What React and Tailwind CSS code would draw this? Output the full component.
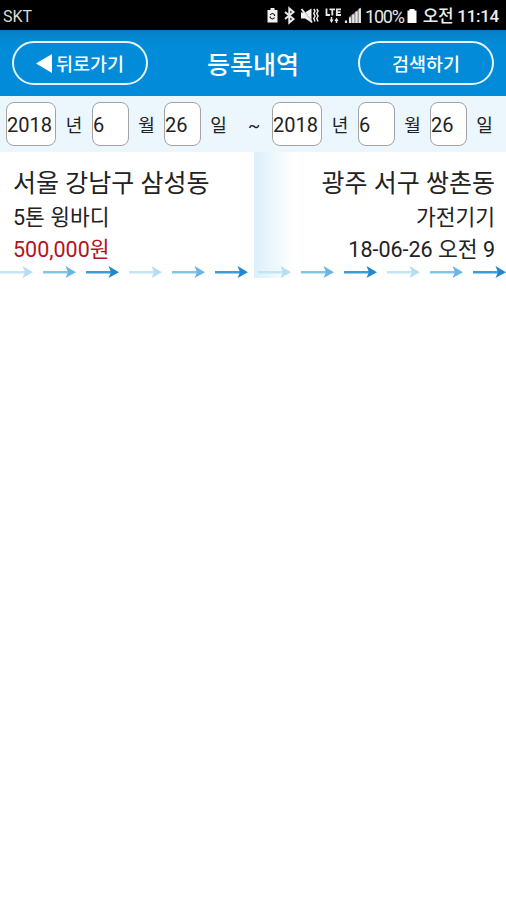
import React from 'react';

const arrowColors = [
  { shaft: '#c3e5f7', head: '#b5def3' },
  { shaft: '#84c4ea', head: '#6ab5e3' },
  { shaft: '#3f9cd9', head: '#2187cf' },
];

const order = {
  from: '서울 강남구 삼성동',
  truck: '5톤 윙바디',
  price: '500,000원',
  to: '광주 서구 쌍촌동',
  cargo: '가전기기',
  date: '18-06-26 오전 9',
};

function StatusIcons() {
  return (
    <svg className="block h-[30px] w-[98px]" viewBox="266 0 98 30" fill="none" stroke="#e8e8e8">
      {/* battery saver */}
      <path d="M267.500 10h3V8h4v2h3v12.500h-10z" fill="#f2f2f2" stroke="none" />
      <path d="M270.200 15q2.300-3 4.300 0v1M274.500 17.500q-2 3-4.300 0v-1" stroke="#111" strokeWidth="1.200" />
      {/* bluetooth */}
      <path d="M285 12l8.500 7-4.200 3.500v-14l4.200 3.500-8.500 7" strokeWidth="2" />
      {/* muted with vibration */}
      <path d="M301 12.500h4l6.500-4v14l-6.500-4h-4z" fill="#f2f2f2" stroke="none" />
      <path d="M303.500 10l9 12.500" stroke="#000" strokeWidth="0.600" />
      <path d="M301.500 9l10.500 13.500" strokeWidth="2" />
      <path d="M313.800 9l1.200 2-1.200 2.500 1.200 2.500-1.200 2.500 1.200 3M316.800 9l1.200 2-1.200 2.500 1.200 2.500-1.200 2.500 1.200 3" strokeWidth="1.500" />
      {/* LTE with data arrows */}
      <path d="M326.500 8.500v6.500h3.500M329.500 9.300h5.500M332.300 9.500v6M341 9.300h-4.200v5.700h4.200M337 12.200h3.500" strokeWidth="1.800" />
      <path d="M329.500 19.500h4l-2 3.500zM334.500 21l2-3.500 2 3.500z" fill="#e8e8e8" stroke="none" />
      <path d="M331.500 17v4M336.500 19.500v3.500" strokeWidth="1.500" />
      {/* signal */}
      <path d="M349 23v-6l12-9.500V23z" fill="#777777" stroke="none" />
      <path d="M346 20.500v2.500M350 17.500v5.500M353.300 14.500v8.500M356.500 11.500v11.500M359.800 8.500v14.500" strokeWidth="2.200" />
    </svg>
  );
}

function DateInput({ value, className }) {
  return (
    <input
      defaultValue={value}
      className={`h-11 rounded-lg border border-[#a3a3a3] bg-white p-0 pt-px text-[20px] text-[#222222] outline-none ${className}`}
    />
  );
}

function DateGroup() {
  return (
    <div className="flex items-center">
      <DateInput value="2018" className="w-[50px]" />
      <span className="w-[36px] pt-[3px] text-center">년</span>
      <DateInput value="6" className="w-[37px]" />
      <span className="w-[35px] pt-[3px] text-center">월</span>
      <DateInput value="26" className="w-[37px]" />
      <span className="w-[35px] pt-[3px] text-center">일</span>
    </div>
  );
}

function Arrows() {
  return (
    <div className="flex h-3 gap-[9px]">
      {[0, 1, 2, 3, 4, 5].map(i => (
        <svg key={i} className="h-3 w-[34px] shrink-0" viewBox="0 0 34 12">
          <path d="M0 5h26v2.500H0z" fill={arrowColors[i % 3].shaft} />
          <path d="M22.500 0L33 6.200l-10.500 5.800 2.500-5.800z" fill={arrowColors[i % 3].head} />
        </svg>
      ))}
    </div>
  );
}

function App() {
  return (
    <div className="h-[900px] w-[506px] overflow-hidden bg-white font-['Roboto','Noto_Sans_CJK_KR',sans-serif] text-[#222222]">
      <div className="flex h-[30px] items-center bg-black text-white">
        <span className="ml-[3px] pt-[3px] text-[16px] leading-none text-[#dddddd]">SKT</span>
        <div className="ml-auto flex items-center">
          <StatusIcons />
          <span className="ml-px w-[42px] whitespace-nowrap pt-[3px] text-[18px] leading-none tracking-[-1.200px] text-[#e8e8e8]">100%</span>
          <svg className="h-[30px] w-[10px]" viewBox="0 0 10 30">
            <path d="M0.500 10.500h2V9h5v1.500h2V23h-9z" fill="#fff" />
          </svg>
          <span className="w-[89px] whitespace-nowrap pt-[3px] pr-[7px] text-right text-[17px] font-medium leading-none tracking-[-0.3px] text-[#eeeeee]">오전 11:14</span>
        </div>
      </div>

      <header className="flex h-[66px] items-center justify-between border-t border-[#0575b3] bg-linear-to-b from-[#0680c6] to-[#028bd8] to-20% px-3 pb-px text-white">
        <button className="flex h-11 w-[136px] items-center justify-center rounded-full border-2 border-[#e8f7ff] text-[18.500px] font-medium">
          <svg className="mr-1 h-[19px] w-[16px]" viewBox="0 0 16 19">
            <path d="M16 0v19L0 9.500z" fill="#fff" />
          </svg>
          <span className="pt-[6px]">뒤로가기</span>
        </button>
        <h1 className="pt-[6px] text-[25px] font-medium">등록내역</h1>
        <button className="h-11 w-[136px] rounded-full border-2 border-[#e8f7ff] pt-[6px] text-[18.500px] font-medium">
          검색하기
        </button>
      </header>

      <div className="flex h-[56px] items-center bg-[#ebf6fd] pl-[6px] text-[18px]">
        <DateGroup />
        <span className="w-[36px] pt-[2px] pl-[12px]">~</span>
        <DateGroup />
      </div>

      <div className="flex h-[126px] whitespace-nowrap text-[21.500px] leading-8">
        <div className="flex w-[254px] flex-col pt-[14px]">
          <div className="pl-[13px]">
            <p className="h-[36px] text-[25px] leading-9">{order.from}</p>
            <p>{order.truck}</p>
            <p className="text-[#b5121b]">{order.price}</p>
          </div>
          <Arrows />
        </div>
        <div className="flex w-[252px] flex-col bg-linear-to-r from-[#dceffa] to-white to-[40px] pt-[14px]">
          <div className="pr-[11px] text-right">
            <p className="h-[36px] text-[25px] leading-9">{order.to}</p>
            <p>{order.cargo}</p>
            <p>{order.date}</p>
          </div>
          <div className="pl-1">
            <Arrows />
          </div>
        </div>
      </div>
    </div>
  );
}

export default App;
